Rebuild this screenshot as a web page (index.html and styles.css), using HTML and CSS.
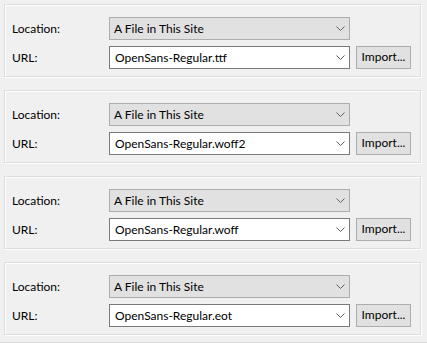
FILE: index.html
```html
<!DOCTYPE html>
<html lang="en">
    <head>
        <title>Font Sources</title>
        <link rel="stylesheet" href="styles.css">
    </head>
    <body>
        <div id="list">
            <div class="group">
                <div class="label">Location:</div>
                <div class="combo combo-ro"><span>A File in This Site</span><svg class="chev" width="9" height="5"><polyline points="0.5,0.5 4.5,4.5 8.5,0.5" /></svg></div>
                <div></div>
                <div class="label">URL:</div>
                <div class="combo combo-edit"><span>OpenSans-Regular.ttf</span><svg class="chev" width="9" height="5"><polyline points="0.5,0.5 4.5,4.5 8.5,0.5" /></svg></div>
                <div class="btn">Import...</div>
            </div>

            <div class="group">
                <div class="label">Location:</div>
                <div class="combo combo-ro"><span>A File in This Site</span><svg class="chev" width="9" height="5"><polyline points="0.5,0.5 4.5,4.5 8.5,0.5" /></svg></div>
                <div></div>
                <div class="label">URL:</div>
                <div class="combo combo-edit"><span>OpenSans-Regular.woff2</span><svg class="chev" width="9" height="5"><polyline points="0.5,0.5 4.5,4.5 8.5,0.5" /></svg></div>
                <div class="btn">Import...</div>
            </div>

            <div class="group">
                <div class="label">Location:</div>
                <div class="combo combo-ro"><span>A File in This Site</span><svg class="chev" width="9" height="5"><polyline points="0.5,0.5 4.5,4.5 8.5,0.5" /></svg></div>
                <div></div>
                <div class="label">URL:</div>
                <div class="combo combo-edit"><span>OpenSans-Regular.woff</span><svg class="chev" width="9" height="5"><polyline points="0.5,0.5 4.5,4.5 8.5,0.5" /></svg></div>
                <div class="btn">Import...</div>
            </div>

            <div class="group">
                <div class="label">Location:</div>
                <div class="combo combo-ro"><span>A File in This Site</span><svg class="chev" width="9" height="5"><polyline points="0.5,0.5 4.5,4.5 8.5,0.5" /></svg></div>
                <div></div>
                <div class="label">URL:</div>
                <div class="combo combo-edit"><span>OpenSans-Regular.eot</span><svg class="chev" width="9" height="5"><polyline points="0.5,0.5 4.5,4.5 8.5,0.5" /></svg></div>
                <div class="btn">Import...</div>
            </div>
        </div>
        <div class="rule"></div>
    </body>
</html>
```

FILE: styles.css
```css
*{
    margin: 0px;
    padding: 0px;
    box-sizing: border-box;
}
body{
    background-color: #f0f0f0;
    font-family: Lato, "Noto Sans", sans-serif;
    font-size: 12px;
    color: #000;
    width: 427px;
    height: 343px;
    overflow: hidden;
}
#list{
    display: flex;
    flex-direction: column;
    gap: 13px;
    padding: 4px 0 7px 4px;
}
.group{
    width: 417px;
    height: 73px;
    border: 1px solid #dcdcdc;
    box-shadow: inset 1px 1px 0 #fff, 1px 1px 0 #fff;
    padding: 12px 0 0 7px;
    display: grid;
    grid-template-columns: 91px 241px 55px;
    grid-template-rows: 23px 23px;
    column-gap: 6px;
    row-gap: 6px;
    align-items: center;
}
.label{
    line-height: 16px;
}
.combo{
    height: 23px;
    display: flex;
    align-items: center;
    justify-content: space-between;
    padding: 0 4px 0 4px;
    white-space: nowrap;
    line-height: 16px;
}
.combo-ro{
    background-color: #e1e1e1;
    border: 1px solid #adadad;
}
.combo-edit{
    background-color: #fff;
    border: 1px solid #7a7a7a;
    padding-left: 5px;
}
.chev{
    display: block;
}
.chev polyline{
    fill: none;
    stroke: #606060;
    stroke-width: 1;
}
.btn{
    height: 23px;
    background-color: #e1e1e1;
    border: 1px solid #adadad;
    text-align: center;
    line-height: 20px;
    white-space: nowrap;
    cursor: pointer;
}
.rule{
    border-top: 1px solid #dcdcdc;
}
```
